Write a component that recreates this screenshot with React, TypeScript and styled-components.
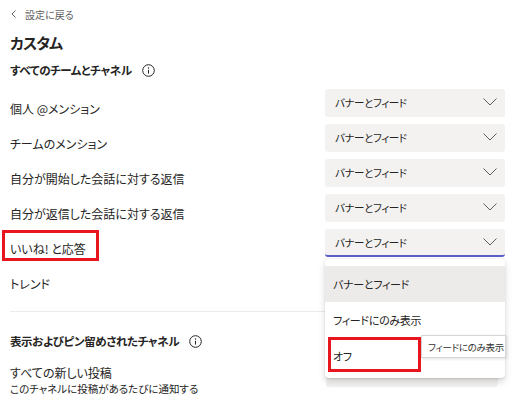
import styled, { createGlobalStyle } from "styled-components";

const GlobalStyle = createGlobalStyle`
  html, body {
    margin: 0;
    padding: 0;
    background: #ffffff;
  }
  body {
    font-family: "Noto Sans CJK JP", "Noto Sans", sans-serif;
    font-feature-settings: "palt";
    color: #252423;
  }
`;

const Page = styled.div`
  position: relative;
  width: 514px;
  height: 410px;
  overflow: hidden;
  box-sizing: border-box;
  padding: 0 9px 0 10px;
  display: flex;
  flex-direction: column;
`;

const BackRow = styled.div`
  height: 28px;
  display: flex;
  align-items: center;
  gap: 9px;
  padding-left: 1px;
  font-size: 10px;
  color: #616161;
`;

const Title = styled.h1`
  margin: 0;
  height: 28px;
  display: flex;
  align-items: center;
  font-size: 15px;
  letter-spacing: -0.8px;
  font-weight: 700;
`;

const SectionHeader = styled.div<{ $top?: number }>`
  height: 28px;
  margin-top: ${(p) => p.$top ?? 0}px;
  display: flex;
  align-items: center;
  gap: 10px;
  font-size: 11.5px;
  letter-spacing: -0.4px;
  font-weight: 700;
`;

const RowList = styled.div`
  margin-top: 5px;
  display: flex;
  flex-direction: column;
  gap: 7px;
`;

const Row = styled.div`
  height: 28px;
  display: flex;
  align-items: flex-end;
  justify-content: space-between;
`;

const Label = styled.div`
  font-size: 12px;
  line-height: 16px;
`;

const Select = styled.div<{ $active?: boolean; $peek?: boolean }>`
  width: ${(p) => (p.$peek ? 172 : 180)}px;
  height: 28px;
  box-sizing: border-box;
  align-self: ${(p) => (p.$peek ? "flex-start" : "center")};
  margin-top: ${(p) => (p.$peek ? "-5px" : "0")};
  margin-right: ${(p) => (p.$peek ? "7px" : "0")};
  display: flex;
  align-items: center;
  justify-content: space-between;
  padding: 0 8px 0 10px;
  background: #f3f2f1;
  border-radius: 3px;
  border-bottom: 2px solid ${(p) => (p.$active ? "#5b5fc7" : "transparent")};
  font-size: 10.5px;
  letter-spacing: -0.4px;
  color: #252423;
`;

const Divider = styled.div`
  height: 1px;
  background: #ebebeb;
  margin-top: 19px;
`;

const PostRow = styled.div`
  margin-top: 9px;
  display: flex;
  justify-content: space-between;
`;

const PostText = styled.div`
  display: flex;
  flex-direction: column;
`;

const PostTitle = styled.div`
  font-size: 12px;
  line-height: 17px;
`;

const PostSub = styled.div`
  font-size: 10.5px;
  line-height: 15px;
`;

const Menu = styled.div`
  position: absolute;
  left: 325px;
  top: 259px;
  width: 180px;
  box-sizing: border-box;
  padding: 7px 0 4px;
  background: #ffffff;
  border-radius: 4px;
  box-shadow: 0 3.2px 7.2px rgba(0, 0, 0, 0.14), 0 0.6px 1.8px rgba(0, 0, 0, 0.11);
`;

const MenuItem = styled.div<{ $hover?: boolean }>`
  height: 36px;
  display: flex;
  align-items: center;
  padding-left: 8px;
  font-size: 11px;
  letter-spacing: -0.3px;
  color: #252423;
  background: ${(p) => (p.$hover ? "#edebe9" : "transparent")};
`;

const Tooltip = styled.div`
  position: absolute;
  left: 421px;
  top: 335px;
  width: 85px;
  height: 23px;
  box-sizing: border-box;
  padding-left: 6px;
  display: flex;
  align-items: center;
  background: #ffffff;
  border: 1px solid #d6d6d6;
  box-shadow: 1px 1px 3px rgba(0, 0, 0, 0.12);
  font-size: 9.5px;
  letter-spacing: -0.3px;
  color: #323130;
  white-space: nowrap;
`;

const Highlight = styled.div<{ $x: number; $y: number; $w: number; $h: number }>`
  position: absolute;
  left: ${(p) => p.$x}px;
  top: ${(p) => p.$y}px;
  width: ${(p) => p.$w}px;
  height: ${(p) => p.$h}px;
  box-sizing: border-box;
  border: 3px solid #e8141e;
`;

function Chevron() {
  return (
    <svg width="14" height="8" viewBox="0 0 14 8">
      <polyline points="0.5,0.5 7,7 13.5,0.5" fill="none" stroke="#605e5c" strokeWidth="1" />
    </svg>
  );
}

function BackChevron() {
  return (
    <svg width="5" height="8" viewBox="0 0 5 8">
      <polyline points="4.5,0.5 1,4 4.5,7.5" fill="none" stroke="#616161" strokeWidth="1" />
    </svg>
  );
}

function InfoIcon() {
  return (
    <svg width="13" height="13" viewBox="0 0 13 13">
      <circle cx="6.5" cy="6.5" r="5.8" fill="none" stroke="#252423" strokeWidth="1" />
      <circle cx="6.5" cy="4" r="0.7" fill="#252423" />
      <line x1="6.5" y1="5.8" x2="6.5" y2="9.6" stroke="#252423" strokeWidth="1" />
    </svg>
  );
}

const rows = [
  "個人 @メンション",
  "チームのメンション",
  "自分が開始した会話に対する返信",
  "自分が返信した会話に対する返信",
  "いいね! と応答",
  "トレンド",
];

export default function App() {
  return (
    <>
      <GlobalStyle />
      <Page>
        <BackRow>
          <BackChevron />
          設定に戻る
        </BackRow>
        <Title>カスタム</Title>
        <SectionHeader>
          すべてのチームとチャネル
          <InfoIcon />
        </SectionHeader>
        <RowList>
          {rows.map((label, i) => (
            <Row key={label}>
              <Label>{label}</Label>
              <Select $active={i === 4}>
                {i < 5 ? "バナーとフィード" : ""}
                <Chevron />
              </Select>
            </Row>
          ))}
        </RowList>
        <Divider />
        <SectionHeader $top={15}>
          表示およびピン留めされたチャネル
          <InfoIcon />
        </SectionHeader>
        <PostRow>
          <PostText>
            <PostTitle>すべての新しい投稿</PostTitle>
            <PostSub>このチャネルに投稿があるたびに通知する</PostSub>
          </PostText>
          <Select $peek>
            バナーとフィード
            <Chevron />
          </Select>
        </PostRow>

        <Menu>
          <MenuItem $hover>バナーとフィード</MenuItem>
          <MenuItem>フィードにのみ表示</MenuItem>
          <MenuItem>オフ</MenuItem>
        </Menu>
        <Tooltip>フィードにのみ表示</Tooltip>
        <Highlight $x={2} $y={230} $w={97} $h={31} />
        <Highlight $x={328} $y={337} $w={93} $h={35} />
      </Page>
    </>
  );
}
